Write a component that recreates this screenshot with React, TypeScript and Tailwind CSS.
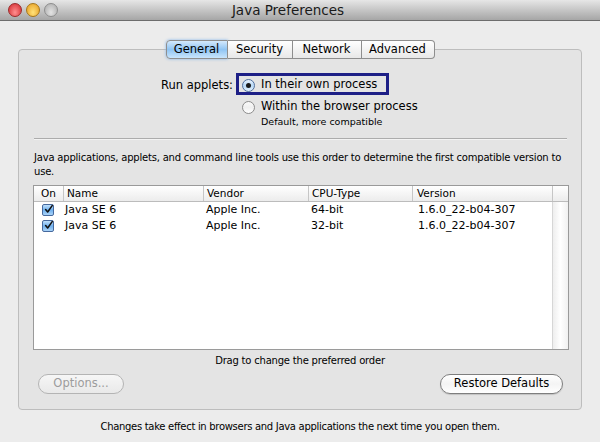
import { type ReactNode } from "react";

// ─── Aqua bits ──────────────────────────────────────────────────────────────

function Light({ color }: { color: string }) {
  return <div className={`w-[14px] h-[14px] rounded-full border ${color}`} />;
}

function Radio({ on }: { on?: boolean }) {
  return (
    <div
      className={`w-[13px] h-[13px] rounded-full border flex items-center justify-center shrink-0 ${
        on
          ? "border-[#4f6f9e] bg-linear-to-b from-[#e9f3fd] via-[#b7d8f6] to-[#e2f0fd]"
          : "border-[#8c8c8c] bg-linear-to-b from-[#fafafa] via-[#f0f0f0] to-[#ffffff]"
      }`}
    >
      {on && <div className="w-[5px] h-[5px] rounded-full bg-[#1b1b1b]" />}
    </div>
  );
}

function Check() {
  return (
    <div className="w-[12px] h-[12px] rounded-[2px] border border-[#46699e] bg-linear-to-b from-[#bfe0fb] via-[#6fb0ee] to-[#a9d3f8] flex items-center justify-center shrink-0">
      <svg width="11" height="11" viewBox="0 0 11 11" className="-mt-[2px] ml-[1px]">
        <path d="M2 5.5 L4.5 8.5 L10 0.8" fill="none" stroke="#111" strokeWidth="1.9" strokeLinecap="round" strokeLinejoin="round" />
      </svg>
    </div>
  );
}

function Tab({ label, w, active, first, last }: { label: string; w: string; active?: boolean; first?: boolean; last?: boolean }) {
  return (
    <div
      className={`${w} h-[19px] flex items-center justify-center text-[11.5px] border-y border-[#8e8e8e] ${
        first ? "border-l rounded-l-[4px]" : ""
      } ${last ? "border-r rounded-r-[4px]" : "border-r"} ${
        active
          ? "bg-linear-to-b from-[#d4e9fc] via-[#8fc4f3] to-[#c9e5fc] shadow-[0_0_3px_#7fb3ea]"
          : "bg-linear-to-b from-[#ffffff] via-[#f3f3f3] to-[#e8e8e8]"
      }`}
    >
      {label}
    </div>
  );
}

function Pill({ children, disabled, w }: { children: ReactNode; disabled?: boolean; w: string }) {
  return (
    <div
      className={`${w} h-[20px] rounded-full border flex items-center justify-center text-[11.5px] ${
        disabled
          ? "border-[#b4b4b4] text-[#9c9c9c] bg-linear-to-b from-[#f6f6f6] to-[#e9e9e9]"
          : "border-[#7e7e7e] text-black bg-linear-to-b from-[#ffffff] via-[#f4f4f4] to-[#ffffff] shadow-[0_1px_1px_rgba(0,0,0,0.15)]"
      }`}
    >
      {children}
    </div>
  );
}

// ─── Table ──────────────────────────────────────────────────────────────────

const cols = [
  { label: "On", w: "w-[29px]", pl: "pl-[7px]" },
  { label: "Name", w: "w-[140px]", pl: "pl-[3px]" },
  { label: "Vendor", w: "w-[105px]", pl: "pl-[3px]" },
  { label: "CPU-Type", w: "w-[104px]", pl: "pl-[3px]" },
  { label: "Version", w: "w-[140px]", pl: "pl-[4px]" },
];

const rows = [
  { name: "Java SE 6", vendor: "Apple Inc.", cpu: "64-bit", version: "1.6.0_22-b04-307" },
  { name: "Java SE 6", vendor: "Apple Inc.", cpu: "32-bit", version: "1.6.0_22-b04-307" },
];

function JvmTable() {
  return (
    <div className="ml-[14px] w-[536px] h-[165px] border border-[#9a9a9a] bg-white flex flex-col text-[10.5px]">
      <div className="h-[16px] flex border-b border-[#bcbcbc] bg-linear-to-b from-[#ffffff] to-[#ececec]">
        {cols.map((c, i) => (
          <div key={c.label} className={`${c.w} ${c.pl} h-full flex items-center ${i > 0 ? "border-l border-[#c6c6c6]" : ""}`}>
            {c.label}
          </div>
        ))}
        <div className="w-[16px] h-full border-l border-[#c6c6c6]" />
      </div>
      <div className="flex flex-1">
        <div className="w-[518px] text-[11px]">
          {rows.map((r, i) => (
            <div key={i} className="h-[16px] flex items-center">
              <div className="w-[29px] pl-[8px] flex items-center">
                <Check />
              </div>
              <div className="w-[140px] pl-[2px]">{r.name}</div>
              <div className="w-[105px] pl-[3px]">{r.vendor}</div>
              <div className="w-[104px] pl-[3px]">{r.cpu}</div>
              <div className="w-[140px] pl-[6px]">{r.version}</div>
            </div>
          ))}
        </div>
        <div className="w-[16px] border-l border-[#d6d6d6] bg-linear-to-r from-[#eeeeee] via-[#ffffff] to-[#f1f1f1]" />
      </div>
    </div>
  );
}

// ─── App ────────────────────────────────────────────────────────────────────

export default function App() {
  return (
    <div className="w-[600px] h-[442px] bg-[#ececec] flex flex-col text-black font-['DejaVu_Sans',sans-serif] overflow-hidden">
      {/* Title bar */}
      <div className="h-[21px] shrink-0 flex items-center border-b border-[#6d6d6d] bg-linear-to-b from-[#e6e6e6] to-[#a6a6a6]">
        <div className="w-[80px] pl-[8px] flex items-center gap-[4px]">
          <Light color="border-[#9c2a2a] bg-radial-[at_50%_70%] from-[#ff8f8f] to-[#d1262b]" />
          <Light color="border-[#a5761a] bg-radial-[at_50%_70%] from-[#ffe27a] to-[#e59a1c]" />
          <Light color="border-[#8d8d8d] bg-radial-[at_50%_70%] from-[#e3e3e3] to-[#a9a9a9]" />
        </div>
        <div className="flex-1 text-center text-[13.5px] text-[#1a1a1a]">Java Preferences</div>
        <div className="w-[104px]" />
      </div>

      {/* Tabs */}
      <div className="mt-[19px] -mb-[10px] flex justify-center relative z-10">
        <Tab label="General" w="w-[62px]" active first />
        <Tab label="Security" w="w-[65px]" />
        <Tab label="Network" w="w-[69px]" />
        <Tab label="Advanced" w="w-[73px]" last />
      </div>

      {/* Group box */}
      <div className="ml-[18px] w-[564px] h-[361px] border border-[#bdbdbd] rounded-[4px] bg-[#e4e4e4] flex flex-col text-[11px]">
        <div className="mt-[23px] flex items-center h-[22px]">
          <div className="w-[214px] text-right text-[11.5px] pt-[3px]">Run applets:</div>
          <div className="ml-[3px] w-[153px] h-[22px] border-[3px] border-[#1d1f86] flex items-center pl-[3px] pt-[2px] gap-[6px] text-[11.5px]">
            <Radio on />
            <span>In their own process</span>
          </div>
        </div>
        <div className="mt-[4px] h-[16px] flex items-center pl-[223px] gap-[6px] text-[11.5px]">
          <Radio />
          <span>Within the browser process</span>
        </div>
        <div className="h-[14px] flex items-center pl-[242px] text-[9.5px]">Default, more compatible</div>

        <div className="mt-[9px] ml-[15px] w-[533px] border-t border-[#acacac] border-b border-b-[#f3f3f3]" />

        <div className="mt-[11px] ml-[15px] w-[536px] leading-[14px] text-[10px] tracking-[-0.2px]">
          Java applications, applets, and command line tools use this order to determine the first compatible version to use.
        </div>

        <div className="mt-[6px]">
          <JvmTable />
        </div>

        <div className="mt-[3px] h-[14px] flex items-center justify-center text-[10px] tracking-[-0.2px]">
          Drag to change the preferred order
        </div>

        <div className="mt-[7px] flex justify-between pl-[19px] pr-[18px]">
          <Pill w="w-[86px]" disabled>Options...</Pill>
          <Pill w="w-[123px]">Restore Defaults</Pill>
        </div>
      </div>

      <div className="mt-[9px] h-[14px] flex items-center justify-center text-[10px] tracking-[-0.3px]">
        Changes take effect in browsers and Java applications the next time you open them.
      </div>
    </div>
  );
}
